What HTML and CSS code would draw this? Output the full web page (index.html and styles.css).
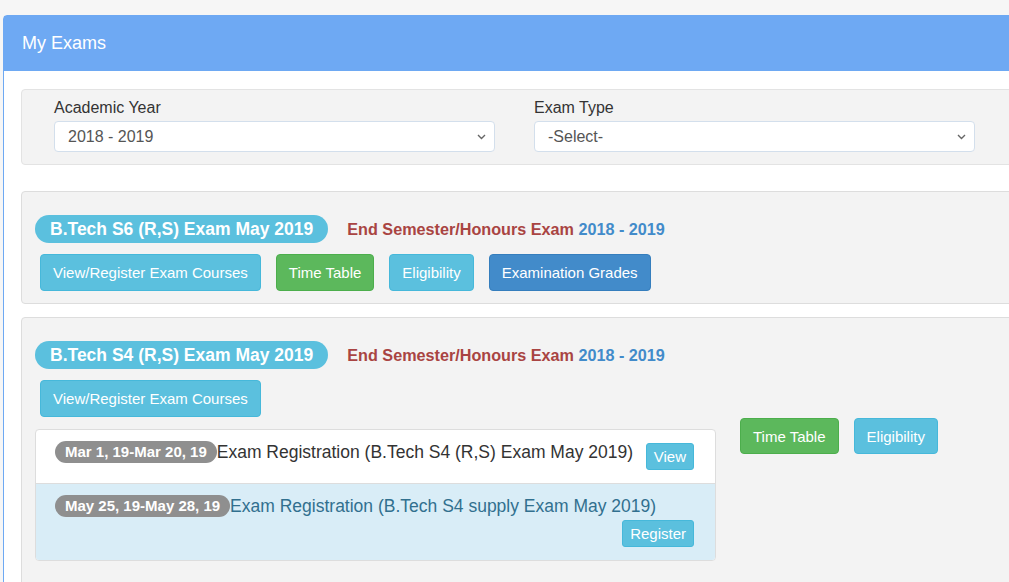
FILE: index.html
```html
<!DOCTYPE html>
<html lang="en">
<head>
<meta charset="utf-8">
<title>My Exams</title>
<link rel="stylesheet" href="styles.css">
</head>
<body>
<div class="page">
  <div class="panel">
    <div class="panel-heading">My Exams</div>
    <div class="panel-body">
      <div class="well">
        <div class="field">
          <label class="field-label">Academic Year</label>
          <div class="select-wrap">
            <select class="select"><option>2018 - 2019</option></select>
            <svg class="chev" width="9" height="6" viewBox="0 0 9 6"><path d="M1 1l3.5 3.5L8 1" fill="none" stroke="#666" stroke-width="1.4"/></svg>
          </div>
        </div>
        <div class="field">
          <label class="field-label">Exam Type</label>
          <div class="select-wrap">
            <select class="select"><option>-Select-</option></select>
            <svg class="chev" width="9" height="6" viewBox="0 0 9 6"><path d="M1 1l3.5 3.5L8 1" fill="none" stroke="#666" stroke-width="1.4"/></svg>
          </div>
        </div>
      </div>

      <div class="card">
        <div class="title-row">
          <span class="exam-badge">B.Tech S6 (R,S) Exam May 2019</span>
          <span class="exam-kind">End Semester/Honours Exam <span class="year">2018 - 2019</span></span>
        </div>
        <div class="btn-row">
          <button class="btn btn-info">View/Register Exam Courses</button>
          <button class="btn btn-success">Time Table</button>
          <button class="btn btn-info">Eligibility</button>
          <button class="btn btn-primary">Examination Grades</button>
        </div>
      </div>

      <div class="card card-last">
        <div class="title-row">
          <span class="exam-badge">B.Tech S4 (R,S) Exam May 2019</span>
          <span class="exam-kind">End Semester/Honours Exam <span class="year">2018 - 2019</span></span>
        </div>
        <div class="card-row">
          <div class="left-col">
            <div class="btn-row">
              <button class="btn btn-info">View/Register Exam Courses</button>
            </div>
            <div class="list-group">
              <div class="list-item">
                <span class="item-text"><span class="date-badge">Mar 1, 19-Mar 20, 19</span>Exam Registration (B.Tech S4 (R,S) Exam May 2019)</span>
                <button class="btn-sm">View</button>
              </div>
              <div class="list-item list-item-info">
                <span class="item-text"><span class="date-badge">May 25, 19-May 28, 19</span>Exam Registration (B.Tech S4 supply Exam May 2019)</span>
                <button class="btn-sm">Register</button>
              </div>
            </div>
          </div>
          <div class="right-col">
            <button class="btn btn-success btn-r">Time Table</button>
            <button class="btn btn-info btn-r">Eligibility</button>
          </div>
        </div>
      </div>
    </div>
  </div>
</div>
</body>
</html>
```
FILE: styles.css
```css
html, body {
  margin: 0;
  padding: 0;
}
body {
  background: #f6f6f6;
  font-family: "Liberation Sans", Arial, sans-serif;
  color: #333;
  overflow: hidden;
  height: 582px;
}
.page {
  padding: 15px 0 0 3px;
  height: 567px;
  overflow: hidden;
}
.panel {
  width: 1040px;
  min-height: 580px;
  background: #fff;
  border: 1px solid #6ea9f3;
  border-top-left-radius: 4px;
}
.panel-heading {
  background: #6ea9f3;
  height: 55px;
  display: flex;
  align-items: center;
  padding-left: 18px;
  font-size: 18px;
  color: #fff;
  padding-bottom: 1px;
  box-sizing: border-box;
}
.panel-body {
  padding: 18px 0 0 17px;
}
.well {
  background: #f3f3f3;
  border: 1px solid #e3e3e3;
  border-radius: 4px;
  padding: 8px 0 12px 32px;
  display: flex;
  gap: 39px;
}
.field {
  display: flex;
  flex-direction: column;
}
.field-label {
  font-size: 16px;
  line-height: 20px;
  margin-bottom: 3px;
  color: #333;
}
.select-wrap {
  position: relative;
}
.select {
  appearance: none;
  -webkit-appearance: none;
  display: block;
  width: 441px;
  height: 31px;
  border: 1px solid #d3dfec;
  border-radius: 4px;
  background: #fff;
  padding: 0 13px;
  font-family: "Liberation Sans", Arial, sans-serif;
  font-size: 16px;
  color: #555;
}
.chev {
  position: absolute;
  right: 9px;
  top: 13px;
}
.card {
  margin-top: 26px;
  background: #f3f3f3;
  border: 1px solid #dddddd;
  border-radius: 4px;
  padding: 23px 0 12px 13px;
}
.card + .card {
  margin-top: 13px;
}
.card-last {
  padding-bottom: 40px;
}
.title-row {
  display: flex;
  align-items: center;
}
.exam-badge {
  display: inline-block;
  background: #5bc0de;
  color: #fff;
  font-weight: bold;
  font-size: 17.5px;
  height: 28px;
  line-height: 28px;
  padding: 0 15px;
  border-radius: 14px;
}
.exam-kind {
  margin-left: 19px;
  font-weight: bold;
  font-size: 16.2px;
  color: #a94442;
}
.year {
  color: #428bca;
}
.btn-row {
  display: flex;
  gap: 15px;
  margin-top: 11px;
  padding-left: 5px;
}
.btn {
  height: 37px;
  padding: 0 12px;
  border: 1px solid transparent;
  border-radius: 4px;
  font-family: "Liberation Sans", Arial, sans-serif;
  font-size: 15px;
  color: #fff;
}
.btn-info {
  background: #5bc0de;
  border-color: #46b8da;
}
.btn-success {
  background: #5cb85c;
  border-color: #4cae4c;
}
.btn-primary {
  background: #428bca;
  border-color: #357ebd;
}
.card-row {
  display: flex;
  align-items: flex-start;
}
.left-col {
  width: 681px;
}
.right-col {
  margin-left: 24px;
  padding-top: 49px;
  display: flex;
  gap: 15px;
}
.btn-r {
  height: 36px;
}
.list-group {
  margin-top: 12px;
  border: 1px solid #dddddd;
  border-radius: 4px;
  background: #fff;
  overflow: hidden;
}
.list-item {
  display: flex;
  flex-wrap: wrap;
  align-items: flex-start;
  padding: 11px 21px 13px 19px;
}
.list-item + .list-item {
  border-top: 1px solid #dddddd;
}
.list-item-info {
  background: #d9edf7;
  color: #31708f;
  padding-bottom: 13px;
}
.item-text {
  font-size: 17.5px;
  line-height: 22px;
  white-space: nowrap;
}
.date-badge {
  display: inline-block;
  vertical-align: top;
  background: #8f8f8f;
  color: #fff;
  font-weight: bold;
  font-size: 15px;
  height: 22px;
  line-height: 22px;
  padding: 0 10px;
  border-radius: 11px;
}
.btn-sm {
  margin-left: auto;
  margin-top: 3px;
  height: 27px;
  padding: 0 7px;
  border: 1px solid #46b8da;
  border-radius: 3px;
  background: #5bc0de;
  color: #fff;
  font-family: "Liberation Sans", Arial, sans-serif;
  font-size: 15px;
}
.list-item:first-child .btn-sm {
  margin-top: 2px;
}
```
